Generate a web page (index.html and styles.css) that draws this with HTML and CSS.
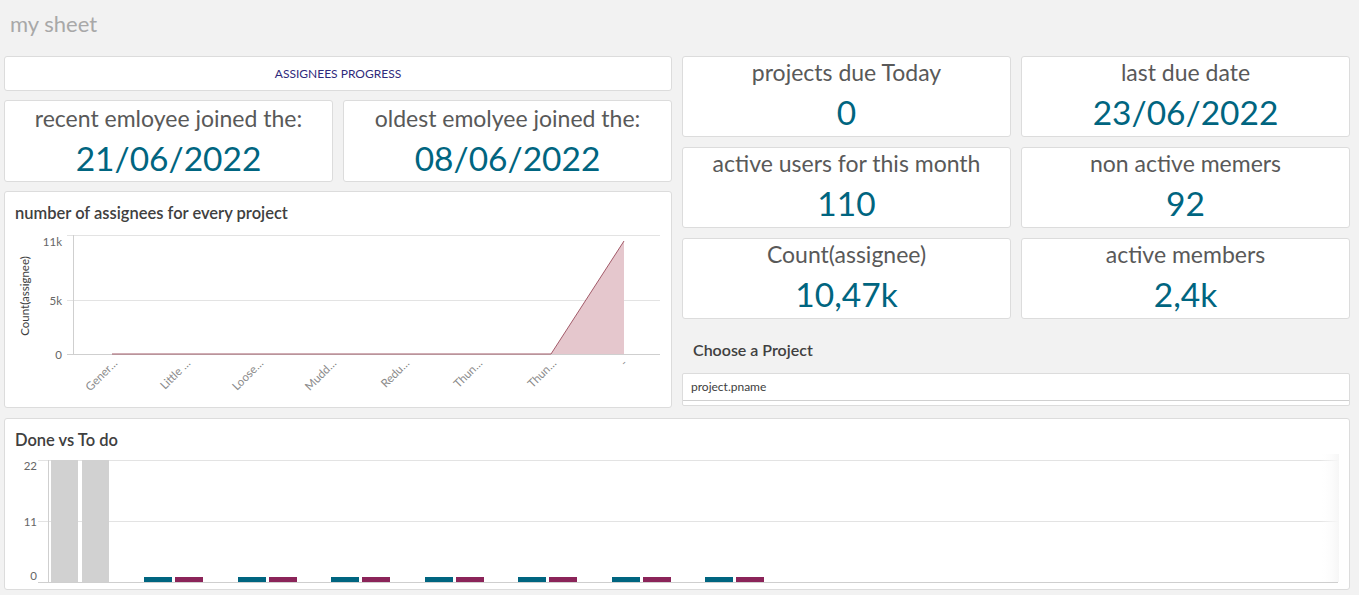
FILE: index.html
```html
<!DOCTYPE html>
<html lang="en">
<head>
<meta charset="utf-8">
<title>my sheet</title>
<link rel="stylesheet" href="styles.css">
</head>
<body>
<header class="sheet-header"><h1 class="sheet-title">my sheet</h1></header>
<main class="sheet">
  <section class="col col-left">
    <div class="card banner">ASSIGNEES PROGRESS</div>
    <div class="kpi-row">
      <div class="card kpi kpi-tall">
        <div class="kpi-label">recent emloyee joined the:</div>
        <div class="kpi-value">21/06/2022</div>
      </div>
      <div class="card kpi kpi-tall">
        <div class="kpi-label">oldest emolyee joined the:</div>
        <div class="kpi-value">08/06/2022</div>
      </div>
    </div>
    <div class="card chart line-card">
      <div class="chart-title">number of assignees for every project</div>
      <svg class="line-svg" width="666" height="180" viewBox="0 0 666 180">
        <g class="grid">
          <line x1="62" y1="8.5" x2="655" y2="8.5"/>
          <line x1="62" y1="73.5" x2="655" y2="73.5"/>
        </g>
        <line class="axis" x1="62" y1="127.5" x2="655" y2="127.5"/>
        <line class="axis" x1="68.5" y1="8" x2="68.5" y2="128"/>
        <g class="tick">
          <text x="57" y="19">11k</text>
          <text x="57" y="78">5k</text>
          <text x="57" y="132">0</text>
        </g>
        <text class="axis-title" transform="translate(24 69) rotate(-90)">Count(assignee)</text>
        <polygon class="area" points="107,127 546,127 619,14 619,127"/>
        <polyline class="area-line" points="107,127 546,127 619,14"/>
        <g class="xlabel">
          <text transform="translate(113 137) rotate(-45)">Gener…</text>
          <text transform="translate(186 137) rotate(-45)">Little …</text>
          <text transform="translate(259 137) rotate(-45)">Loose…</text>
          <text transform="translate(332 137) rotate(-45)">Mudd…</text>
          <text transform="translate(405 137) rotate(-45)">Redu…</text>
          <text transform="translate(478 137) rotate(-45)">Thun…</text>
          <text transform="translate(552 137) rotate(-45)">Thun…</text>
          <text transform="translate(623 137) rotate(-45)">-</text>
        </g>
      </svg>
    </div>
  </section>
  <section class="col col-right">
    <div class="kpi-grid">
      <div class="card kpi">
        <div class="kpi-label">projects due Today</div>
        <div class="kpi-value">0</div>
      </div>
      <div class="card kpi">
        <div class="kpi-label">last due date</div>
        <div class="kpi-value">23/06/2022</div>
      </div>
      <div class="card kpi">
        <div class="kpi-label">active users for this month</div>
        <div class="kpi-value">110</div>
      </div>
      <div class="card kpi">
        <div class="kpi-label">non active memers</div>
        <div class="kpi-value">92</div>
      </div>
      <div class="card kpi">
        <div class="kpi-label">Count(assignee)</div>
        <div class="kpi-value">10,47k</div>
      </div>
      <div class="card kpi">
        <div class="kpi-label">active members</div>
        <div class="kpi-value">2,4k</div>
      </div>
    </div>
    <div class="filter">
      <div class="filter-title">Choose a Project</div>
      <div class="listbox">
        <div class="listbox-head">project.pname</div>
        <div class="listbox-body"></div>
      </div>
    </div>
  </section>
  <section class="card chart bar-card">
    <div class="chart-title">Done vs To do</div>
    <svg class="bar-svg" width="1344" height="135" viewBox="0 0 1344 135">
      <defs>
        <linearGradient id="fade" x1="0" x2="1" y1="0" y2="0">
          <stop offset="0" stop-color="#fff" stop-opacity="0"/>
          <stop offset="1" stop-color="#f6f6f6" stop-opacity="1"/>
        </linearGradient>
      </defs>
      <g class="grid">
        <line x1="33" y1="6.5" x2="1333" y2="6.5"/>
        <line x1="33" y1="67.5" x2="1333" y2="67.5"/>
      </g>
      <line class="axis" x1="33" y1="128.5" x2="1333" y2="128.5"/>
      <line class="axis" x1="43.5" y1="6" x2="43.5" y2="129"/>
      <g class="tick">
        <text x="32" y="16">22</text>
        <text x="32" y="72">11</text>
        <text x="32" y="126">0</text>
      </g>
      <rect class="bar-gray" x="46" y="6" width="27" height="122"/>
      <rect class="bar-gray" x="77" y="6" width="27" height="122"/>
      <g class="pair">
        <rect class="bar-teal" x="139" y="123" width="28" height="5"/>
        <rect class="bar-mag" x="170" y="123" width="28" height="5"/>
        <rect class="bar-teal" x="233" y="123" width="28" height="5"/>
        <rect class="bar-mag" x="264" y="123" width="28" height="5"/>
        <rect class="bar-teal" x="326" y="123" width="28" height="5"/>
        <rect class="bar-mag" x="357" y="123" width="28" height="5"/>
        <rect class="bar-teal" x="420" y="123" width="28" height="5"/>
        <rect class="bar-mag" x="451" y="123" width="28" height="5"/>
        <rect class="bar-teal" x="513" y="123" width="28" height="5"/>
        <rect class="bar-mag" x="544" y="123" width="28" height="5"/>
        <rect class="bar-teal" x="607" y="123" width="28" height="5"/>
        <rect class="bar-mag" x="638" y="123" width="28" height="5"/>
        <rect class="bar-teal" x="700" y="123" width="28" height="5"/>
        <rect class="bar-mag" x="731" y="123" width="28" height="5"/>
      </g>
      <rect x="1315" y="0" width="19" height="128" fill="url(#fade)"/>
    </svg>
  </section>
</main>
</body>
</html>
```

FILE: styles.css
```css
* { box-sizing: border-box; }

html, body {
  margin: 0;
  padding: 0;
  background: #f2f2f2;
  font-family: "Source Sans Pro", Lato, "Noto Sans", sans-serif;
  color: #595959;
}

.sheet-header {
  height: 56px;
  padding: 11px 0 0 10px;
}

.sheet-title {
  margin: 0;
  font-size: 22px;
  line-height: 26px;
  font-weight: 400;
  color: #a8a8a8;
}

.sheet {
  display: grid;
  grid-template-columns: 668px 668px;
  column-gap: 10px;
  row-gap: 10px;
  padding: 0 9px 0 4px;
}

.card {
  background: #fff;
  border: 1px solid #dcdcdc;
  border-radius: 3px;
}

.col {
  display: flex;
  flex-direction: column;
}

.col-left { gap: 9px; }

.banner {
  height: 35px;
  display: flex;
  align-items: center;
  justify-content: center;
  font-size: 12px;
  font-weight: 400;
  color: #2f2a7c;
}

.kpi-row {
  display: grid;
  grid-template-columns: 329px 329px;
  gap: 10px;
}

.kpi {
  height: 81px;
  display: flex;
  flex-direction: column;
  align-items: center;
  padding-top: 3px;
}

.kpi-tall {
  height: 82px;
  padding-top: 5px;
}

.kpi-label {
  font-size: 23px;
  line-height: 24px;
  color: #595959;
  white-space: nowrap;
}

.kpi-value {
  margin-top: 8px;
  font-size: 33.5px;
  line-height: 40px;
  color: #006580;
  white-space: nowrap;
}

.chart {
  display: flex;
  flex-direction: column;
}

.line-card {
  height: 217px;
}

.chart-title {
  height: 35px;
  padding: 12px 0 0 10px;
  font-size: 16.5px;
  line-height: 18px;
  font-weight: 600;
  color: #404040;
}

.line-svg, .bar-svg {
  display: block;
}

.grid line {
  stroke: #e3e3e3;
  stroke-width: 1;
}

.axis {
  stroke: #cfcfcf;
  stroke-width: 1;
}

.tick text {
  font-family: "Source Sans Pro", Lato, sans-serif;
  font-size: 11.5px;
  fill: #666;
  text-anchor: end;
}

.axis-title {
  font-family: "Source Sans Pro", Lato, sans-serif;
  font-size: 11.5px;
  fill: #404040;
  text-anchor: middle;
}

.area {
  fill: #e5c7cd;
}

.area-line {
  fill: none;
  stroke: #a25a69;
  stroke-width: 1;
}

.xlabel text {
  font-family: "Source Sans Pro", Lato, sans-serif;
  font-size: 11.5px;
  fill: #8a8a8a;
  text-anchor: end;
}

.col-right {
  display: flex;
  flex-direction: column;
}

.kpi-grid {
  display: grid;
  grid-template-columns: 329px 329px;
  column-gap: 10px;
  row-gap: 10px;
}

.filter {
  padding-top: 19px;
}

.filter-title {
  padding-left: 11px;
  font-size: 16px;
  line-height: 24px;
  font-weight: 600;
  color: #404040;
}

.listbox {
  margin-top: 11px;
  background: #fff;
  border: 1px solid #dcdcdc;
  border-radius: 2px;
  height: 33px;
}

.listbox-head {
  height: 27px;
  padding: 6px 0 0 8px;
  font-size: 12px;
  line-height: 14px;
  font-weight: 400;
  color: #404040;
  border-bottom: 1px solid #d0d0d0;
}

.bar-card {
  grid-column: 1 / 3;
  height: 172px;
}

.bar-gray { fill: #d1d1d1; }
.bar-teal { fill: #006580; }
.bar-mag { fill: #8b2459; }
```
